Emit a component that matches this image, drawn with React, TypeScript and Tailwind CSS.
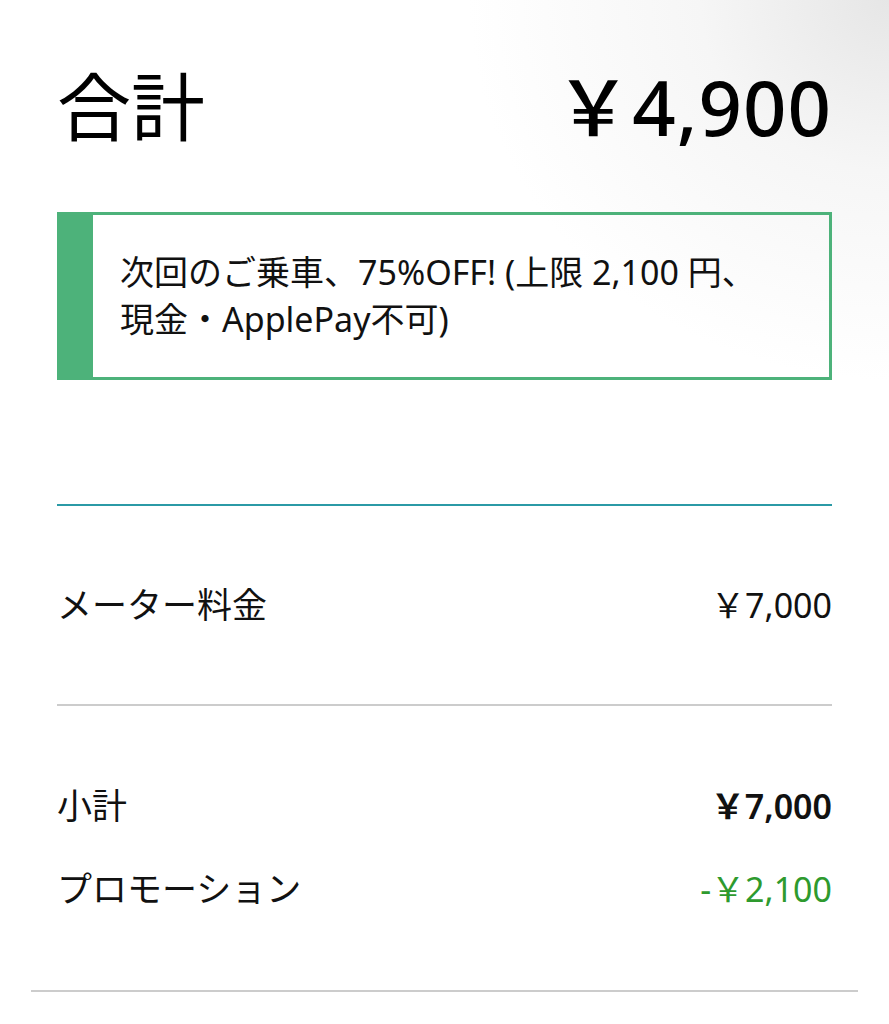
const font = "font-['Noto_Sans','Noto_Sans_CJK_JP',sans-serif]";

function Row({ label, value, valueClass }: { label: string; value: string; valueClass?: string }) {
  return (
    <div className="flex h-[48px] items-center justify-between">
      <span className="text-[35px] text-[#111]">{label}</span>
      <span className={valueClass ?? "text-[34px] text-[#111]"}>{value}</span>
    </div>
  );
}

export default function App() {
  return (
    <div
      className={`${font} relative h-[1024px] w-[889px] overflow-hidden bg-white`}
      style={{ backgroundImage: "radial-gradient(ellipse 420px 380px at 100% 0%, #e6e6e6 0%, #f6f6f6 45%, #ffffff 100%)" }}
    >
      <div className="px-[57px] pt-[57px]">
        <div className="flex h-[100px] items-center justify-between">
          <h1 className="text-[74px] font-normal leading-[100px] text-black">合計</h1>
          <span className="text-[76px] font-medium leading-[100px] tracking-[1px] text-black">￥4,900</span>
        </div>

        <div className="mt-[55px] flex h-[168px] border-[3px] border-[#4db27a]">
          <div className="w-[33px] bg-[#4db27a]" />
          <p className="flex items-center pl-[27px] pr-4 text-[34px] leading-[47px] text-[#111]">
            次回のご乗車、75%OFF! (上限 2,100 円、
            <br />
            現金・ApplePay不可)
          </p>
        </div>

        <div className="mt-[124px] h-[2px] bg-[#2b9aa6]" />

        <div className="py-[75px]">
          <Row label="メーター料金" value="￥7,000" />
        </div>

        <div className="h-[2px] bg-[#cccccc]" />

        <div className="flex flex-col gap-[35px] pt-[76px]">
          <Row label="小計" value="￥7,000" valueClass="text-[34px] font-semibold text-[#111]" />
          <Row label="プロモーション" value="-￥2,100" valueClass="text-[34px] text-[#2e9a2e]" />
        </div>
      </div>
      <div className="mx-[31px] mt-[77px] h-[2px] bg-[#cccccc]" />
    </div>
  );
}
